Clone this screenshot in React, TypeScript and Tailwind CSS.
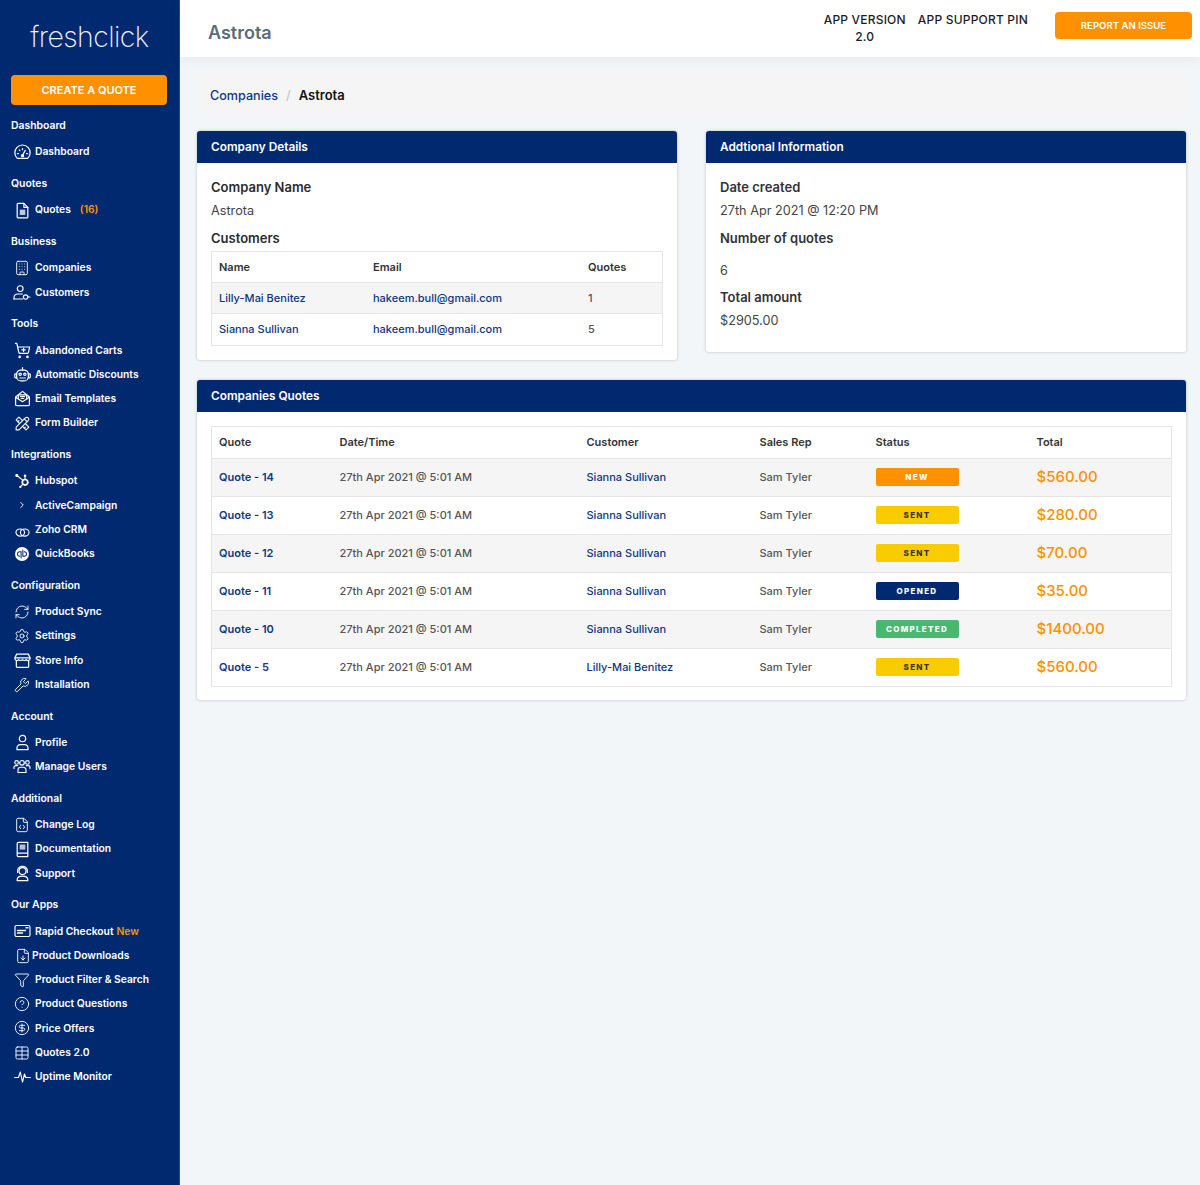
import React from "react";
import {
  Building, ChevronRight, RefreshCw, Settings, Wrench, FileCode, FileDown, Funnel, CircleHelp, CircleDollarSign, Table,
} from "lucide-react";
import { TbTools } from "react-icons/tb";
import { SiHubspot, SiQuickbooks } from "react-icons/si";

const Svg = ({ children, w = 17, h = 17, vb = "0 0 16 16", sw = 1.15, className }: { children: React.ReactNode; w?: number; h?: number; vb?: string; sw?: number; className?: string }) => (
  <svg width={w} height={h} viewBox={vb} fill="none" stroke="currentColor" strokeWidth={sw} strokeLinecap="round" strokeLinejoin="round" className={className}>
    {children}
  </svg>
);

const GaugeIcon = () => (
  <Svg>
    <path d="M3.2 13.5h9.6a7.2 7.2 0 1 0-9.6 0z" />
    <path d="M8 10.6 10.6 6" />
    <circle cx="8" cy="11" r="1" />
    <path d="M3.2 9h1M11.8 9h1M5 5.6l.6.6M8 4.4v.9" />
  </Svg>
);
const QuoteIcon = () => (
  <Svg>
    <path d="M3 2.2A.9.9 0 0 1 3.9 1.3h5.4L13 5v9a1 1 0 0 1-1 1H4a1 1 0 0 1-1-1z" />
    <path d="M9.3 1.3V5H13" />
    <rect x="5.4" y="7.2" width="5.2" height="5" fill="currentColor" stroke="none" opacity="0.75" />
  </Svg>
);
const CustomerIcon = () => (
  <Svg w={18} h={15} vb="0 0 18 15">
    <circle cx="7.2" cy="3.6" r="2.9" />
    <path d="M1 14v-1.4C1 10.400 2.800 9 5 9h4.400" />
    <path d="M1 14h8.500" />
    <circle cx="12.600" cy="12" r="2.200" />
    <path d="M14.800 12H17" />
  </Svg>
);
const CartIcon = () => (
  <Svg vb="0 0 24 24" sw={1.7}>
    <circle cx="8" cy="21" r="1" />
    <circle cx="19" cy="21" r="1" />
    <path d="M2.050 2.050h2l2.660 12.420a2 2 0 0 0 2 1.580h9.780a2 2 0 0 0 1.950-1.570l1.650-7.430H5.120" />
    <path d="M13.500 8.500v5M11 11h5" />
  </Svg>
);
const RobotIcon = () => (
  <Svg>
    <rect x="2.500" y="3.800" width="11" height="10.200" rx="4" />
    <path d="M2.500 7.500H1.500a.8.8 0 0 0-.8.8v2a.8.8 0 0 0 .8.8h1M13.500 7.500h1a.8.8 0 0 1 .8.8v2a.8.8 0 0 1-.8.8h-1M8 3.800V1.500" />
    <circle cx="5.800" cy="7.800" r="1.100" />
    <circle cx="10.200" cy="7.800" r="1.100" />
    <path d="M5.500 11.300h5" strokeDasharray="1 1" />
  </Svg>
);
const MailIcon = () => (
  <Svg>
    <path d="M1.500 6.500 8 1.300l6.500 5.200v7.200a1 1 0 0 1-1 1h-11a1 1 0 0 1-1-1z" />
    <path d="M1.500 6.800 8 11l6.500-4.200" />
    <path d="M4 8V4.500h8V8" />
    <path d="M6 6.200h4M6.800 8h2.400" />
  </Svg>
);
const ZohoIcon = () => (
  <svg width="15" height="15" viewBox="0 0 16 16" fill="none" stroke="currentColor" strokeWidth="1.2" className="mt-[5px]">
    <ellipse cx="5.600" cy="8" rx="4.600" ry="3.800" />
    <ellipse cx="10.400" cy="8" rx="4.600" ry="3.800" />
  </svg>
);
const StoreIcon = () => (
  <Svg>
    <path d="M2.500 2h11l1.600 3.500v.8a1.900 1.900 0 0 1-3.550.8 2.300 2.300 0 0 1-3.550.1 2.300 2.300 0 0 1-3.550-.1A1.900 1.900 0 0 1 .9 6.300v-.8z" />
    <path d="M2.200 8.500v5.200a.8.8 0 0 0 .8.8h10a.8.8 0 0 0 .8-.8V8.500M1 5.500h14" />
  </Svg>
);
const ProfileIcon = () => (
  <Svg>
    <circle cx="8" cy="4.300" r="3" />
    <path d="M2.800 14.800v-1.800a3 3 0 0 1 3-3h4.400a3 3 0 0 1 3 3v1.800z" />
  </Svg>
);
const UsersIcon = () => (
  <Svg w={18} h={15} vb="0 0 18 15">
    <circle cx="9" cy="3.800" r="2.300" />
    <circle cx="3.600" cy="3.400" r="1.800" />
    <circle cx="14.400" cy="3.400" r="1.800" />
    <path d="M5 13.500v-2.500a2.800 2.800 0 0 1 2.800-2.800h2.400A2.800 2.800 0 0 1 13 11v2.500z" />
    <path d="M1 9.500V8.400a1.800 1.800 0 0 1 1.800-1.800h2M17 9.500V8.400a1.800 1.800 0 0 0-1.800-1.800h-2" />
  </Svg>
);
const BookIcon = () => (
  <Svg>
    <path d="M3 12.500V2.500a1.200 1.200 0 0 1 1.200-1.200H13v13.400H4.200A1.200 1.200 0 0 1 3 13.500v-1A1.200 1.200 0 0 1 4.200 11.500H13" />
    <rect x="5.300" y="3.300" width="5.400" height="4.800" fill="currentColor" stroke="none" opacity="0.7" />
  </Svg>
);
const SupportIcon = () => (
  <Svg>
    <circle cx="8" cy="5.700" r="3.300" />
    <path d="M3.400 7V5.500c0-5.600 9.200-5.600 9.200 0V7" />
    <path d="M3 14.800v-1c0-2.200 2-3.400 5-3.400s5 1.200 5 3.400v1z" />
  </Svg>
);
const CheckoutIcon = () => (
  <Svg w={17} h={14} vb="0 0 17 14">
    <rect x="1" y="1.500" width="15" height="11" rx="1.500" />
    <path d="M3.500 6.500h2M6.500 6.500h2M9.500 6.500h2M3.500 9h5M12 3.800h2" strokeWidth="1.400" />
  </Svg>
);
const PulseIcon = () => (
  <Svg w={17} h={15} vb="0 0 17 15">
    <path d="M.6 8.500H4.500L6.300 3l2.200 10L10.500 5l1.300 3.500h4.600" />
  </Svg>
);

type Item = { icon: React.ReactNode; label: string; extra?: React.ReactNode; tight?: boolean };
const s = { size: 16, strokeWidth: 1.35 };
const sections: { title: string; items: Item[] }[] = [
  { title: "Dashboard", items: [{ icon: <GaugeIcon />, label: "Dashboard" }] },
  { title: "Quotes", items: [{ icon: <QuoteIcon />, label: "Quotes", extra: <span className="ml-[9px] text-[#ff9100]">(16)</span> }] },
  { title: "Business", items: [{ icon: <Building {...s} />, label: "Companies" }, { icon: <CustomerIcon />, label: "Customers" }] },
  { title: "Tools", items: [
    { icon: <CartIcon />, label: "Abandoned Carts" },
    { icon: <RobotIcon />, label: "Automatic Discounts" },
    { icon: <MailIcon />, label: "Email Templates" },
    { icon: <TbTools size={17} strokeWidth={1.5} />, label: "Form Builder" },
  ] },
  { title: "Integrations", items: [
    { icon: <SiHubspot size={14} />, label: "Hubspot" },
    { icon: <ChevronRight size={10} strokeWidth={2.2} />, label: "ActiveCampaign" },
    { icon: <ZohoIcon />, label: "Zoho CRM" },
    { icon: <SiQuickbooks size={14} />, label: "QuickBooks" },
  ] },
  { title: "Configuration", items: [
    { icon: <RefreshCw {...s} />, label: "Product Sync" },
    { icon: <Settings {...s} />, label: "Settings" },
    { icon: <StoreIcon />, label: "Store Info" },
    { icon: <Wrench {...s} />, label: "Installation" },
  ] },
  { title: "Account", items: [{ icon: <ProfileIcon />, label: "Profile" }, { icon: <UsersIcon />, label: "Manage Users" }] },
  { title: "Additional", items: [
    { icon: <FileCode {...s} />, label: "Change Log" },
    { icon: <BookIcon />, label: "Documentation" },
    { icon: <SupportIcon />, label: "Support" },
  ] },
  { title: "Our Apps", items: [
    { icon: <CheckoutIcon />, label: "Rapid Checkout", extra: <span className="ml-[3px] text-[#ff9100]">New</span> },
    { icon: <FileDown {...s} />, label: "Product Downloads", tight: true },
    { icon: <Funnel {...s} />, label: "Product Filter & Search" },
    { icon: <CircleHelp {...s} />, label: "Product Questions" },
    { icon: <CircleDollarSign {...s} />, label: "Price Offers" },
    { icon: <Table {...s} />, label: "Quotes 2.0" },
    { icon: <PulseIcon />, label: "Uptime Monitor" },
  ] },
];

const quotes = [
  { q: "Quote - 14", c: "Sianna Sullivan", st: "NEW", cls: "bg-[#ff9100] text-white", t: "$560.00" },
  { q: "Quote - 13", c: "Sianna Sullivan", st: "SENT", cls: "bg-[#f9cc00] text-[#333333]", t: "$280.00" },
  { q: "Quote - 12", c: "Sianna Sullivan", st: "SENT", cls: "bg-[#f9cc00] text-[#333333]", t: "$70.00" },
  { q: "Quote - 11", c: "Sianna Sullivan", st: "OPENED", cls: "bg-[#012970] text-white", t: "$35.00" },
  { q: "Quote - 10", c: "Sianna Sullivan", st: "COMPLETED", cls: "bg-[#48b871] text-white", t: "$1400.00" },
  { q: "Quote - 5", c: "Lilly-Mai Benitez", st: "SENT", cls: "bg-[#f9cc00] text-[#333333]", t: "$560.00" },
];

function Card({ title, className, children }: { title: string; className: string; children: React.ReactNode }) {
  return (
    <section className={`bg-white rounded-[3px] shadow-[0_0_3px_rgba(40,50,70,0.3)] ${className}`}>
      <h2 className="h-[32px] bg-[#012970] rounded-t-[3px] px-[14px] text-[11.8px] leading-[32px] font-semibold text-white">{title}</h2>
      {children}
    </section>
  );
}

export default function App() {
  return (
    <div className="flex min-h-[1185px] bg-[#f3f6f9] font-['Inter','Liberation_Sans',sans-serif]">
      <aside className="w-[180px] shrink-0 bg-[#012970] text-white border-r border-[#2a478c]">
        <div className="h-[75px] flex items-center justify-center pb-[1px]">
          <span className="font-extralight text-[28.5px] tracking-[-0.6px] leading-none text-[#f1f4fa]">freshclick</span>
        </div>
        <button className="mx-[11px] w-[156px] h-[30px] pt-[1px] rounded-[4px] bg-[#ff9100] text-[11px] font-semibold text-[#fff]">CREATE A QUOTE</button>
        <nav className="pt-[11px]">
          {sections.map((sec) => (
            <div key={sec.title} className="mb-[9.75px]">
              <h3 className="pl-[11px] h-[20px] text-[10.4px] leading-[20px] font-semibold">{sec.title}</h3>
              <ul className="pt-[4px]">
                {sec.items.map((it) => (
                  <li key={it.label} className="h-[24.25px] flex items-center text-[10.3px] font-semibold">
                    <span className={`flex justify-center shrink-0 ml-[13px] ${it.tight ? "w-[19px]" : "w-[18px] mr-[4px]"}`}>{it.icon}</span>
                    <span>{it.label}</span>
                    {it.extra}
                  </li>
                ))}
              </ul>
            </div>
          ))}
        </nav>
      </aside>

      <main className="flex-1 min-w-0">
        <header className="h-[57px] bg-white shadow-[0_2px_12px_rgba(60,70,90,0.08)] flex items-start pl-[28px] pr-[8px]">
          <h1 className="mt-[22px] text-[18px] leading-[22px] font-semibold text-[#5e6b78]">Astrota</h1>
          <div className="ml-auto flex pt-[11px] text-[12px] leading-[17px] font-medium text-[#1c1c1c] tracking-[0.2px]">
            <div className="text-center">APP VERSION<br />2.0</div>
            <div className="ml-[12px]">APP SUPPORT PIN</div>
          </div>
          <button className="ml-[27px] mt-[12px] w-[137px] h-[27px] pt-[1px] rounded-[4px] bg-[#ff9100] text-[9.6px] font-semibold text-white">REPORT AN ISSUE</button>
        </header>

        <div className="pt-[18px] pl-[17px] pr-[14px]">
          <div className="h-[38px] bg-[#f5f5f5] pl-[13px] pt-[4px] flex items-center text-[12.6px] font-medium">
            <a className="text-[#0f3782]">Companies</a>
            <span className="mx-[8px] text-[#c4c8cc]">/</span>
            <span className="text-[13px] font-semibold text-[#111111]">Astrota</span>
          </div>

          <div className="mt-[18px] flex items-start justify-between">
            <Card title="Company Details" className="w-[480px] h-[229px]">
              <div className="pt-[15px] px-[14px] text-[12.7px] text-[#444444]">
                <p className="text-[13px] font-semibold text-[#2b2b2b] leading-[18px]">Company Name</p>
                <p className="mt-[6px] leading-[18px]">Astrota</p>
                <p className="mt-[9px] text-[13px] font-semibold text-[#2b2b2b] leading-[18px]">Customers</p>
                <table className="mt-[4px] w-full table-fixed border border-[#e3e5e8] text-[11px] font-medium">
                  <thead>
                    <tr className="h-[31px] text-left text-[#333333]">
                      <th className="w-[154.5px] pl-[7px] font-semibold">Name</th>
                      <th className="w-[215px] pl-[7px] font-semibold">Email</th>
                      <th className="pl-[7px] font-semibold">Quotes</th>
                    </tr>
                  </thead>
                  <tbody>
                    <tr className="h-[31px] bg-[#f5f5f5] border-t border-[#e3e5e8]">
                      <td className="pl-[7px] text-[#0f3782]">Lilly-Mai Benitez</td>
                      <td className="pl-[7px] text-[#0f3782]">hakeem.bull@gmail.com</td>
                      <td className="pl-[7px] text-[#555555]">1</td>
                    </tr>
                    <tr className="h-[32px] border-t border-[#e3e5e8]">
                      <td className="pl-[7px] text-[#0f3782]">Sianna Sullivan</td>
                      <td className="pl-[7px] text-[#0f3782]">hakeem.bull@gmail.com</td>
                      <td className="pl-[7px] text-[#555555]">5</td>
                    </tr>
                  </tbody>
                </table>
              </div>
            </Card>
            <Card title="Addtional Information" className="w-[480px] h-[221px]">
              <div className="pt-[15px] px-[14px] text-[12.7px] text-[#444444]">
                <p className="text-[13px] font-semibold text-[#333333] leading-[18px]">Date created</p>
                <p className="mt-[6px] leading-[18px]">27th Apr 2021 @ 12:20 PM</p>
                <p className="mt-[9px] text-[13px] font-semibold text-[#333333] leading-[18px]">Number of quotes</p>
                <p className="mt-[15px] leading-[18px]">6</p>
                <p className="mt-[8px] text-[13px] font-semibold text-[#333333] leading-[18px]">Total amount</p>
                <p className="mt-[6px] leading-[18px]">$2905.00</p>
              </div>
            </Card>
          </div>

          <Card title="Companies Quotes" className="mt-[20px] h-[320px]">
            <div className="pt-[14px] px-[14px]">
              <table className="w-full table-fixed border border-[#e3e5e8] text-[11px] font-medium">
                <thead>
                  <tr className="h-[32px] text-left text-[#333333]">
                    <th className="w-[121px] pl-[7px] font-semibold">Quote</th>
                    <th className="w-[247px] pl-[7px] font-semibold">Date/Time</th>
                    <th className="w-[173px] pl-[7px] font-semibold">Customer</th>
                    <th className="w-[116px] pl-[7px] font-semibold">Sales Rep</th>
                    <th className="w-[161px] pl-[7px] font-semibold">Status</th>
                    <th className="pl-[7px] font-semibold">Total</th>
                  </tr>
                </thead>
                <tbody>
                  {quotes.map((r, i) => (
                    <tr key={r.q} className={`h-[38px] border-t border-[#e3e5e8] ${i % 2 === 0 ? "bg-[#f5f5f5]" : "bg-white"}`}>
                      <td className="pl-[7px] font-semibold text-[#0f3782]">{r.q}</td>
                      <td className="pl-[7px] text-[#555555]">27th Apr 2021 @ 5:01 AM</td>
                      <td className="pl-[7px] text-[#0f3782]">{r.c}</td>
                      <td className="pl-[7px] text-[#555555]">Sam Tyler</td>
                      <td className="pl-[7px]">
                        <span className={`block w-[83px] h-[18px] mb-[2px] rounded-[2px] text-center text-[8px] leading-[18px] font-extrabold tracking-[1.3px] ${r.cls}`}>{r.st}</span>
                      </td>
                      <td className="pl-[7px] pb-[1px] text-[15px] font-medium text-[#ff9100]">{r.t}</td>
                    </tr>
                  ))}
                </tbody>
              </table>
            </div>
          </Card>
        </div>
      </main>
    </div>
  );
}
